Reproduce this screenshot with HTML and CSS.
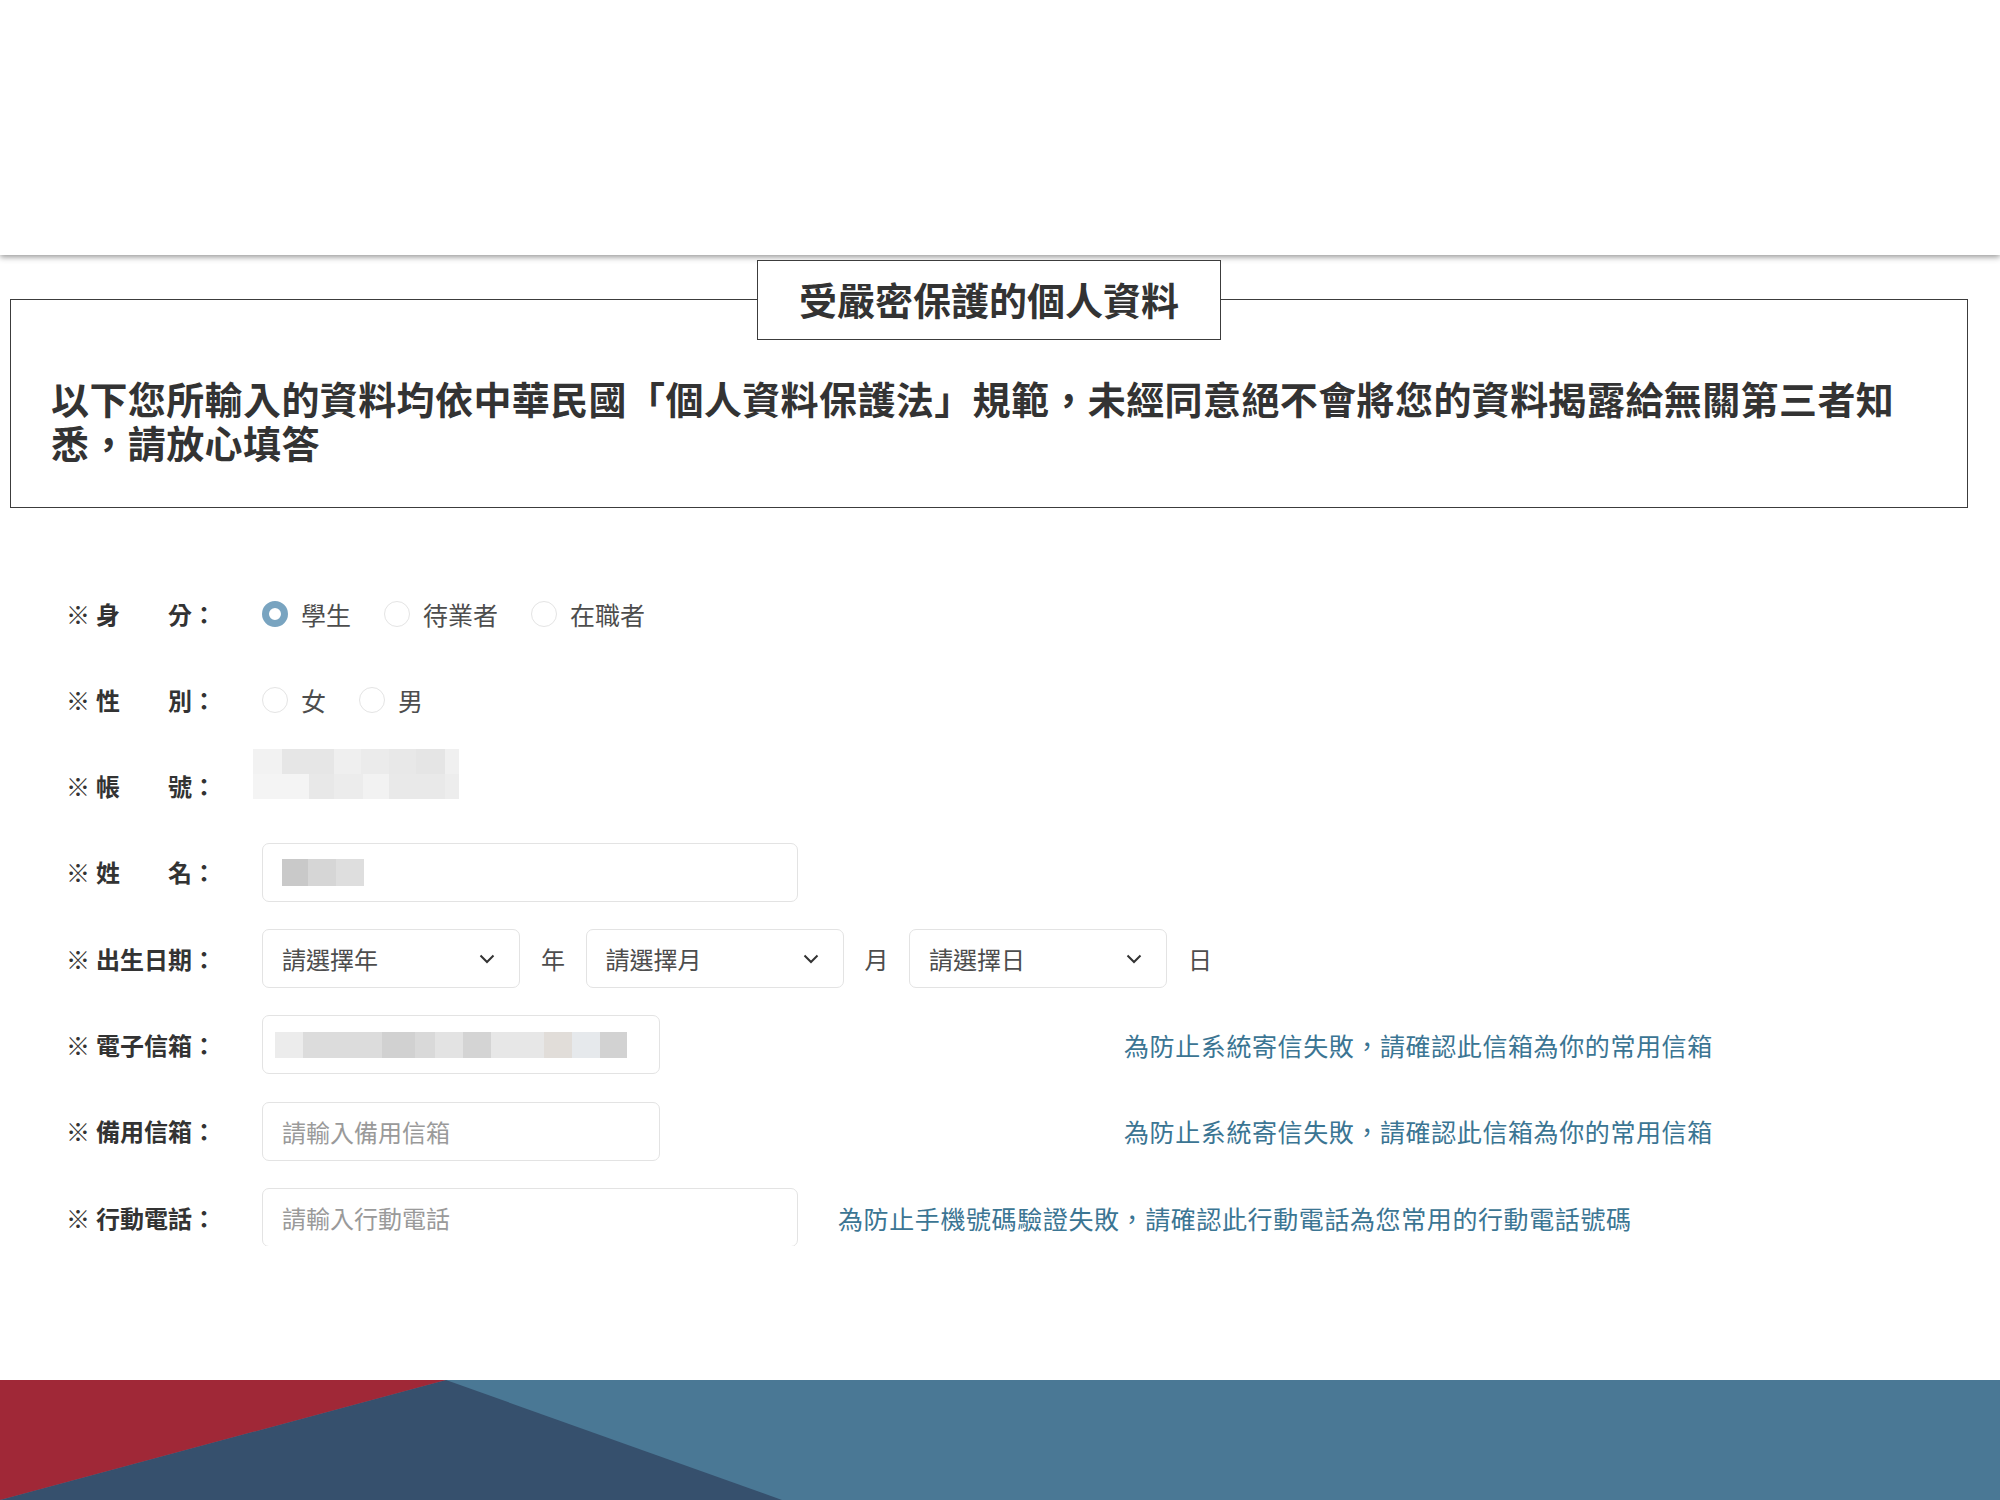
FILE: index.html
```html
<!DOCTYPE html>
<html lang="zh-Hant">
<head>
<meta charset="utf-8">
<title>受嚴密保護的個人資料</title>
<link rel="stylesheet" href="styles.css">
</head>
<body>
<div class="page">
  <header class="topbar"></header>

  <section class="notice">
    <h2 class="notice-title">受嚴密保護的個人資料</h2>
    <p class="notice-text">以下您所輸入的資料均依中華民國「個人資料保護法」規範，未經同意絕不會將您的資料揭露給無關第三者知悉，請放心填答</p>
  </section>

  <form class="form">
    <div class="row">
      <div class="label"><span class="mark">※</span><span class="name">身分</span><span class="colon">：</span></div>
      <div class="options">
        <label class="option"><span class="radio checked"></span>學生</label>
        <label class="option"><span class="radio"></span>待業者</label>
        <label class="option"><span class="radio"></span>在職者</label>
      </div>
    </div>

    <div class="row">
      <div class="label"><span class="mark">※</span><span class="name">性別</span><span class="colon">：</span></div>
      <div class="options">
        <label class="option"><span class="radio"></span>女</label>
        <label class="option"><span class="radio"></span>男</label>
      </div>
    </div>

    <div class="row">
      <div class="label"><span class="mark">※</span><span class="name">帳號</span><span class="colon">：</span></div>
      <div class="mosaic mosaic-account"></div>
    </div>

    <div class="row">
      <div class="label"><span class="mark">※</span><span class="name">姓名</span><span class="colon">：</span></div>
      <div class="field field-wide field-name"><span class="mosaic mosaic-name"></span></div>
    </div>

    <div class="row">
      <div class="label"><span class="mark">※</span><span class="name">出生日期</span><span class="colon">：</span></div>
      <div class="field select"><span>請選擇年</span><svg class="chev" width="16" height="10" viewBox="0 0 16 10"><path d="M1.5 1.5 L8 8 L14.5 1.5" fill="none" stroke="#333" stroke-width="2"/></svg></div>
      <span class="unit">年</span>
      <div class="field select"><span>請選擇月</span><svg class="chev" width="16" height="10" viewBox="0 0 16 10"><path d="M1.5 1.5 L8 8 L14.5 1.5" fill="none" stroke="#333" stroke-width="2"/></svg></div>
      <span class="unit">月</span>
      <div class="field select"><span>請選擇日</span><svg class="chev" width="16" height="10" viewBox="0 0 16 10"><path d="M1.5 1.5 L8 8 L14.5 1.5" fill="none" stroke="#333" stroke-width="2"/></svg></div>
      <span class="unit">日</span>
    </div>

    <div class="row">
      <div class="label"><span class="mark">※</span><span class="name">電子信箱</span><span class="colon">：</span></div>
      <div class="field field-mid field-email"><span class="mosaic mosaic-email"></span></div>
      <span class="hint hint-far">為防止系統寄信失敗，請確認此信箱為你的常用信箱</span>
    </div>

    <div class="row">
      <div class="label"><span class="mark">※</span><span class="name">備用信箱</span><span class="colon">：</span></div>
      <div class="field field-mid"><span class="placeholder">請輸入備用信箱</span></div>
      <span class="hint hint-far">為防止系統寄信失敗，請確認此信箱為你的常用信箱</span>
    </div>

    <div class="row">
      <div class="label"><span class="mark">※</span><span class="name">行動電話</span><span class="colon">：</span></div>
      <div class="field field-wide"><span class="placeholder">請輸入行動電話</span></div>
      <span class="hint hint-near">為防止手機號碼驗證失敗，請確認此行動電話為您常用的行動電話號碼</span>
    </div>
  </form>

  <footer class="banner">
    <svg class="banner-art" width="2000" height="120" viewBox="0 0 2000 120" preserveAspectRatio="none">
      <rect x="0" y="0" width="2000" height="120" fill="#4a7895"/>
      <polygon points="446,0 0,120 782,120" fill="#36506d"/>
      <polygon points="0,0 446,0 0,120" fill="#a02837"/>
    </svg>
  </footer>
</div>
</body>
</html>
```

FILE: styles.css
```css
* { box-sizing: border-box; }

html, body {
  margin: 0;
  padding: 0;
  background: #ffffff;
}

body {
  font-family: "Noto Sans CJK TC", "Noto Sans", sans-serif;
  color: #333333;
}

.page {
  width: 2000px;
  height: 1500px;
  display: flex;
  flex-direction: column;
  overflow: hidden;
}

.topbar {
  height: 255px;
  flex: 0 0 255px;
  background: #ffffff;
  box-shadow: 0 2px 6px rgba(0, 0, 0, 0.42);
  position: relative;
  z-index: 1;
}

.notice {
  position: relative;
  margin: 44px 32px 0 10px;
  height: 209px;
  border: 1.5px solid #3c3c3c;
  padding: 76px 40px 0 40px;
  z-index: 2;
}

.notice-title {
  position: absolute;
  top: 0;
  left: 50%;
  transform: translate(-50%, -50%);
  margin: 0;
  width: 464px;
  height: 80px;
  background: #ffffff;
  border: 1.5px solid #3c3c3c;
  font-size: 38px;
  font-weight: 700;
  line-height: 76px;
  text-align: center;
  color: #333333;
  white-space: nowrap;
}

.notice-text {
  margin: 0;
  font-size: 38px;
  letter-spacing: 0.4px;
  line-height: 44px;
  font-weight: 700;
  color: #333333;
}

.form {
  margin: 76px 0 0 66px;
  height: 662px;
  overflow: hidden;
  display: flex;
  flex-direction: column;
  gap: 27.3px;
}

.row {
  height: 59px;
  flex: 0 0 59px;
  display: flex;
  align-items: center;
}

.label {
  width: 196px;
  flex: 0 0 196px;
  display: flex;
  align-items: center;
  font-size: 24px;
  font-weight: 700;
  color: #333333;
  line-height: 1;
}

.mark {
  font-weight: 400;
  margin-right: 6px;
}

.name {
  width: 96px;
  text-align: justify;
  text-align-last: justify;
}

.options {
  display: flex;
  align-items: center;
}

.option {
  display: flex;
  align-items: center;
  font-size: 25px;
  color: #4d4d4d;
  margin-right: 33px;
}

.radio {
  width: 26px;
  height: 26px;
  border-radius: 50%;
  border: 1px solid #e4e4e4;
  background: #ffffff;
  margin-right: 13px;
}

.radio.checked {
  border: 7.5px solid #79a4c0;
}

.mosaic {
  display: block;
}

.mosaic-account {
  align-self: flex-start;
  margin-top: -8px;
  width: 206px;
  height: 50px;
  margin-left: -9px;
  background:
    linear-gradient(90deg,
      #f2f2f2 0 29px, #e6e6e6 29px 81px, #efefef 81px 108px,
      #ebebeb 108px 136px, #e8e8e8 136px 163px, #e5e5e5 163px 192px,
      #f0f0f0 192px 206px) top / 100% 50% no-repeat,
    linear-gradient(90deg,
      #f4f4f4 0 56px, #e8e8e8 56px 81px, #ececec 81px 110px,
      #f2f2f2 110px 136px, #e9e9e9 136px 192px, #ededed 192px 206px) bottom / 100% 50% no-repeat;
}

.field {
  height: 59px;
  border: 1px solid #e3e3e3;
  border-radius: 7px;
  background: #ffffff;
  display: flex;
  align-items: center;
  padding-left: 19px;
  font-size: 24px;
  color: #4d4d4d;
}

.field-wide { width: 536px; }
.field-mid { width: 398px; }

.field-name { padding-left: 19px; }

.mosaic-name {
  width: 82px;
  height: 27px;
  background: linear-gradient(90deg, #c9c9c9 0 26px, #d6d6d6 26px 54px, #dedede 54px 82px);
}

.field-email { padding-left: 12px; }

.mosaic-email {
  width: 352px;
  height: 26px;
  background: linear-gradient(90deg,
    #ececec 0 28px, #dcdcdc 28px 107px, #d1d1d1 107px 140px,
    #d9d9d9 140px 160px, #e3e3e3 160px 188px, #d4d4d4 188px 216px,
    #e7e7e7 216px 269px, #e1ddd9 269px 297px, #e6e9ec 297px 325px,
    #d2d2d2 325px 352px);
}

.placeholder {
  color: #9a9a9a;
}

.select {
  width: 258px;
  justify-content: space-between;
  padding-right: 24px;
  color: #4d4d4d;
}

.chev {
  display: block;
}

.unit {
  font-size: 24px;
  color: #4d4d4d;
  margin: 0 20.5px 0 21px;
}

.hint {
  font-size: 25px;
  letter-spacing: 0.6px;
  color: #3b7593;
  white-space: nowrap;
}

.hint-far { margin-left: 464px; }
.hint-near { margin-left: 40px; }

.banner {
  margin-top: auto;
  height: 120px;
  flex: 0 0 120px;
}

.banner-art {
  display: block;
}
```
